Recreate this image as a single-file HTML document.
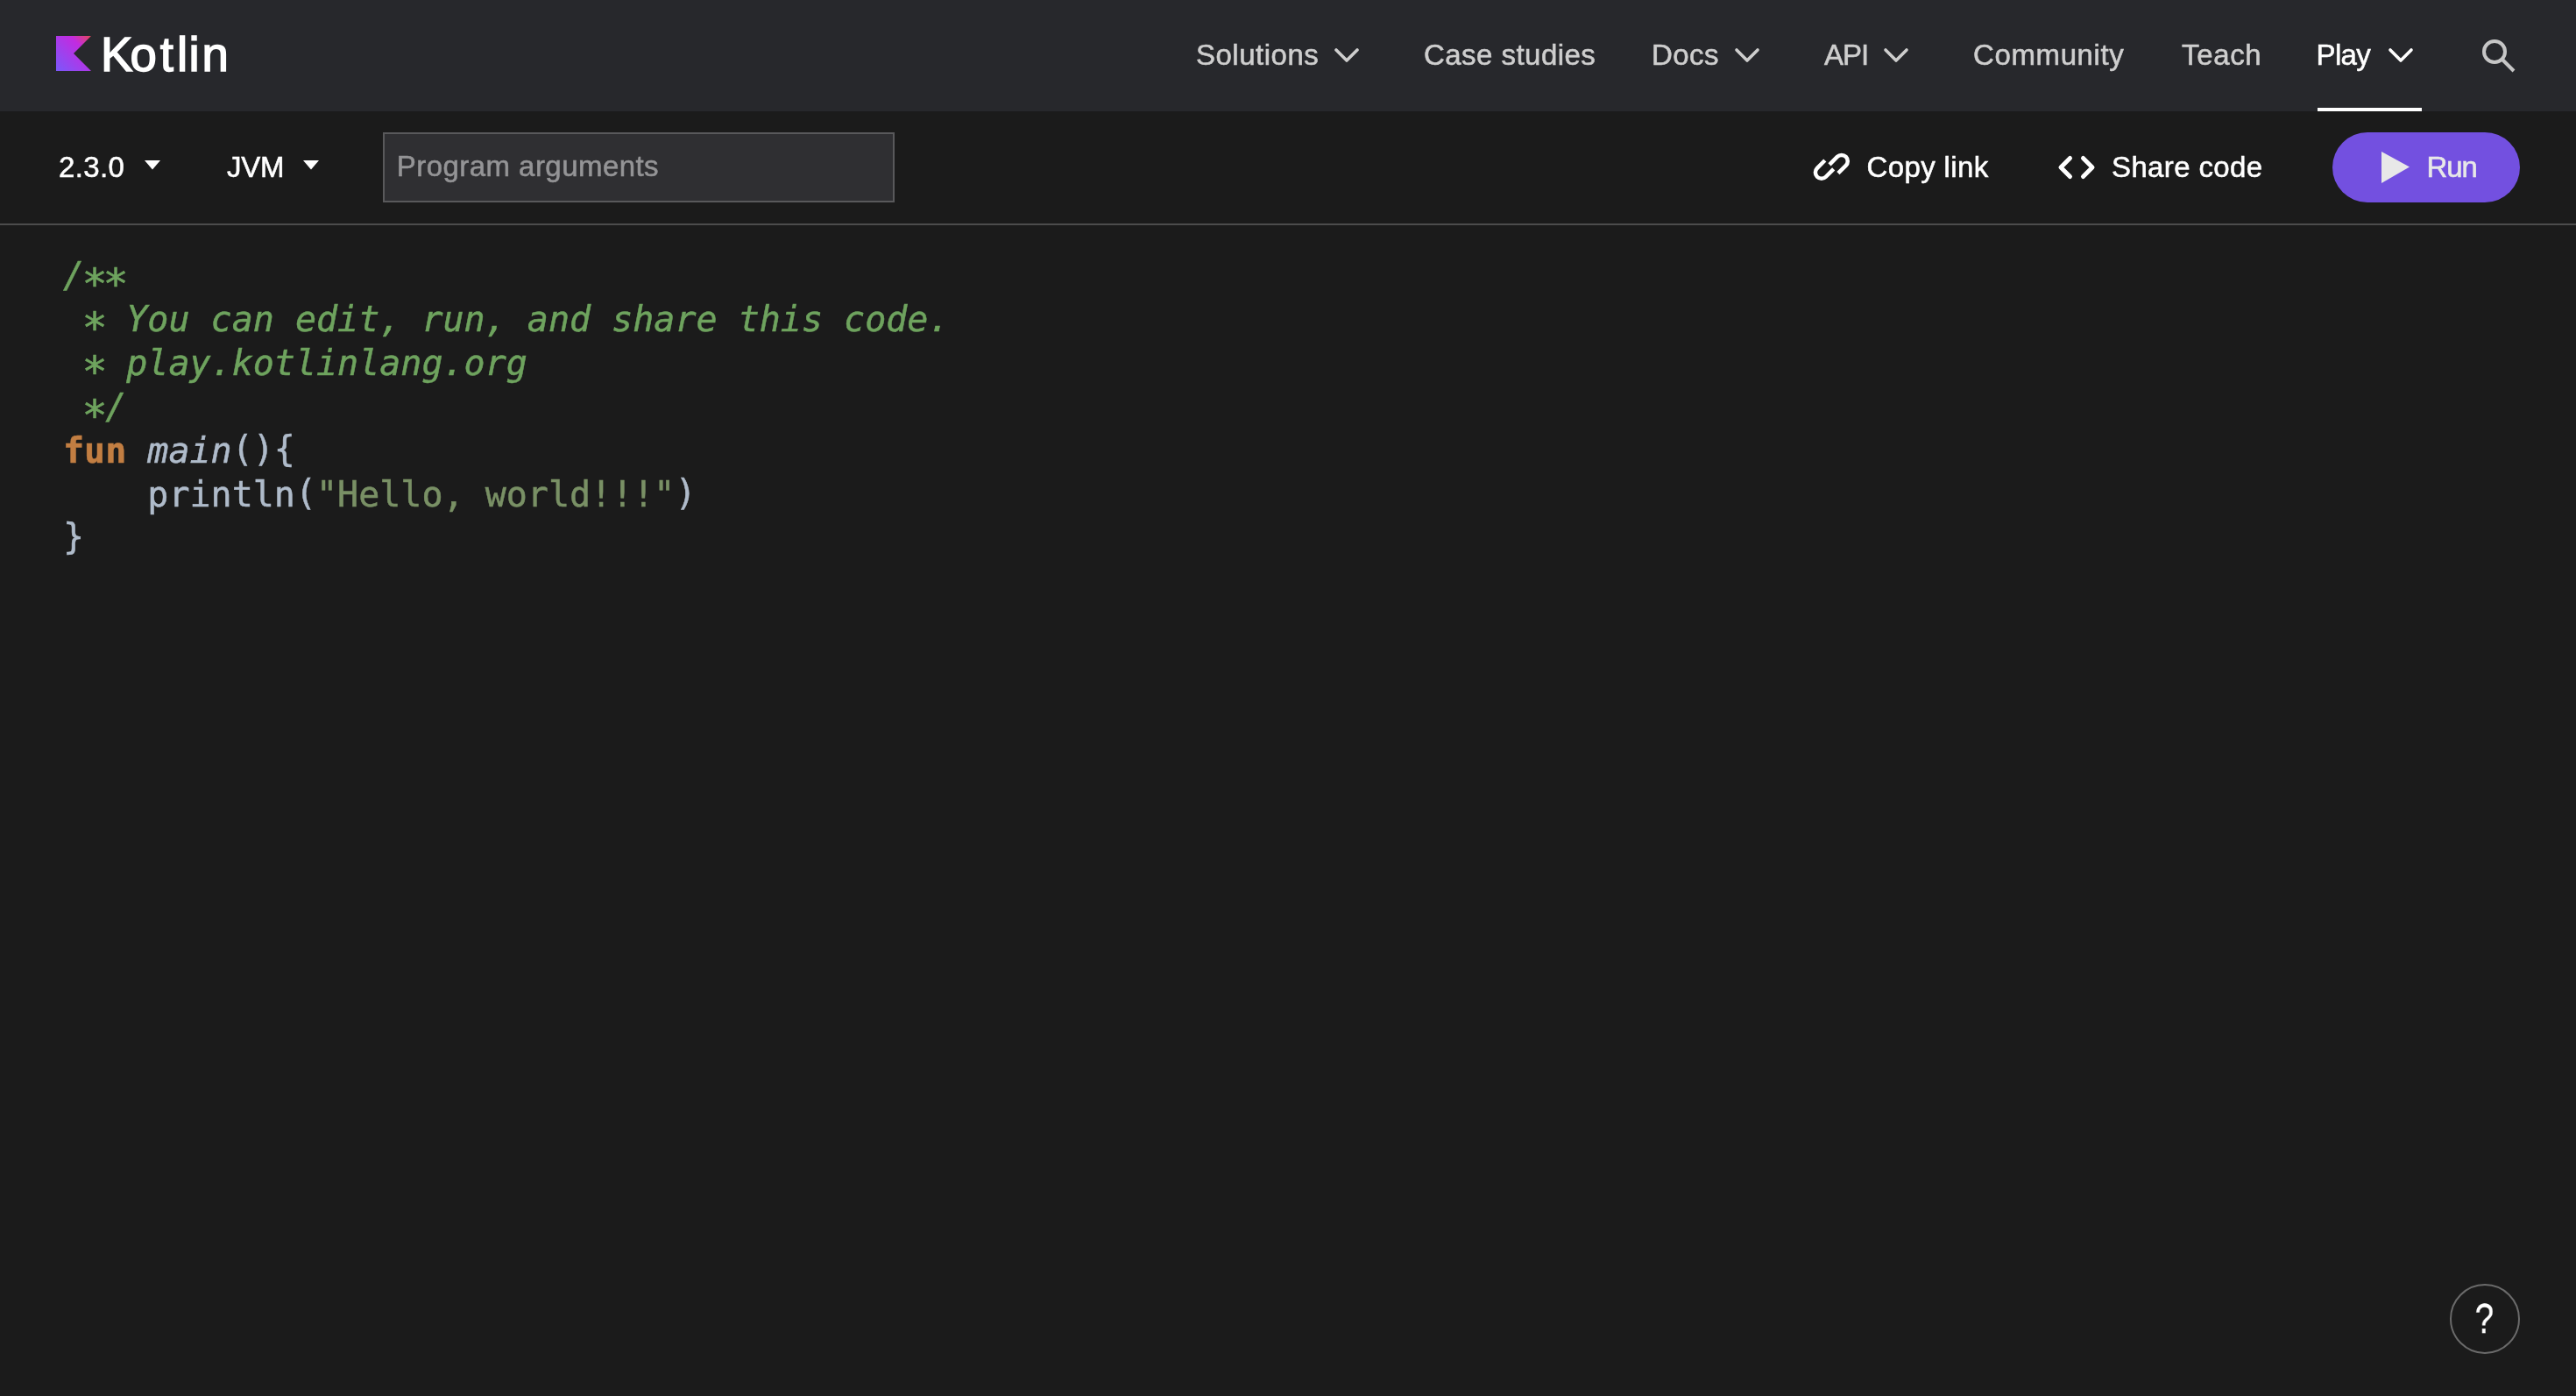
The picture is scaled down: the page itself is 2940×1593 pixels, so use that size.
<!DOCTYPE html>
<html lang="en">
<head>
<meta charset="utf-8">
<title>Kotlin Playground: Edit, Run, Share Kotlin Code Online</title>
<style>
  html, body { margin: 0; padding: 0; }
  body {
    width: 2940px; height: 1593px; overflow: hidden; position: relative;
    background: #1b1b1b; color: #fff;
    font-family: "Liberation Sans", sans-serif;
    -webkit-font-smoothing: antialiased;
  }
  #app { position: absolute; left: 0; top: 0; width: 2940px; height: 1593px; will-change: transform; }
  .abs { position: absolute; white-space: nowrap; line-height: 1; -webkit-text-stroke: 0.55px currentColor; }
  svg { position: absolute; overflow: visible; }

  /* ---------- global header ---------- */
  header.site {
    position: absolute; left: 0; top: 0; width: 2940px; height: 127px;
    background: #27282c;
  }
  .brand { left: 114.95px; top: 35.5px; font-size: 54.6px; color: #fff; -webkit-text-stroke: 1.5px #fff; }
  nav .item { font-size: 33px; color: #cecece; top: 46px; }
  nav .item.active { color: #fff; }
  nav .underline { position: absolute; left: 2645px; top: 123px; width: 119px; height: 4px; background: #fff; }

  /* ---------- playground toolbar ---------- */
  .toolbar {
    position: absolute; left: 0; top: 127px; width: 2940px; height: 128px;
    border-bottom: 2px solid #4c4c4c; background: #1b1b1b;
  }
  .tb { font-size: 33px; color: #fff; top: 46.5px; }
  .args {
    position: absolute; left: 437px; top: 24px; width: 580px; height: 76px;
    border: 2px solid #59595b; background: #2f2f32;
  }
  .args .ph { left: 13.8px; top: 20px; font-size: 33px; color: #949496; letter-spacing: 0.45px; }
  .run {
    position: absolute; left: 2662px; top: 24px; width: 214px; height: 80px;
    border-radius: 40px; background: #7350e0;
  }
  .run .lbl { left: 107.6px; top: 23px; font-size: 33px; color: #e8e8e8; letter-spacing: -1.1px; }

  /* ---------- editor ---------- */
  pre.code {
    position: absolute; left: 72px; top: 289px; margin: 0;
    font-family: "DejaVu Sans Mono", "Liberation Mono", monospace;
    font-size: 40px; line-height: 50px; color: #afbbca; letter-spacing: 0;
    -webkit-text-stroke: 0.5px currentColor;
    tab-size: 4;
  }
  .c { color: #6ea35e; font-style: italic; }
  .a { display: inline-block; font-style: normal; transform: translate(0px, 9.6px) scale(1.21); -webkit-text-stroke: 0.5px currentColor; }
  .k { color: #c27e42; font-weight: bold; }
  .f { font-style: italic; }
  .s { color: #799065; }
  .p { font-weight: normal; position: relative; top: -1.7px; }
  .b { font-weight: normal; position: relative; top: -2.1px; }

  /* ---------- help ---------- */
  .help {
    position: absolute; left: 2796px; top: 1465px; width: 76px; height: 76px;
    border: 2px solid #6a6a6a; border-radius: 50%;
  }
  .help .q { left: 23.8px; top: 14px; font-size: 48px; color: #fff; transform: scaleX(0.8); -webkit-text-stroke: 0.3px #fff; }
</style>
</head>
<body>
<div id="app">

<header class="site">
  <svg width="40" height="40" viewBox="0 0 40 40" style="left:64px;top:41px">
    <defs>
      <linearGradient id="kg" x1="40" y1="0" x2="0" y2="40" gradientUnits="userSpaceOnUse">
        <stop offset="0" stop-color="#e44857"/>
        <stop offset="0.3" stop-color="#c22be0"/>
        <stop offset="1" stop-color="#7a58fb"/>
      </linearGradient>
    </defs>
    <path d="M40 40H0V0h40L20 20z" fill="url(#kg)"/>
  </svg>
  <a class="abs brand"><span style="letter-spacing:-2.85px">K</span><span style="letter-spacing:3.8px">o</span><span style="letter-spacing:4.2px">t</span><span style="letter-spacing:1.4px">l</span><span style="letter-spacing:2.75px">i</span><span>n</span></a>

  <nav>
    <a class="abs item" style="left:1365px;letter-spacing:0.5px">Solutions</a>
    <svg width="28" height="17" style="left:1523px;top:55px"><path d="M2 2 L14 14 L26 2" fill="none" stroke="#cecece" stroke-width="3.6" stroke-linecap="round" stroke-linejoin="round"/></svg>
    <a class="abs item" style="left:1625px;letter-spacing:0.46px">Case studies</a>
    <a class="abs item" style="left:1885px;letter-spacing:0.4px">Docs</a>
    <svg width="28" height="17" style="left:1980px;top:55px"><path d="M2 2 L14 14 L26 2" fill="none" stroke="#cecece" stroke-width="3.6" stroke-linecap="round" stroke-linejoin="round"/></svg>
    <a class="abs item" style="left:2082px;letter-spacing:-0.95px">API</a>
    <svg width="28" height="17" style="left:2150px;top:55px"><path d="M2 2 L14 14 L26 2" fill="none" stroke="#cecece" stroke-width="3.6" stroke-linecap="round" stroke-linejoin="round"/></svg>
    <a class="abs item" style="left:2252px;letter-spacing:0.62px">Community</a>
    <a class="abs item" style="left:2490px;letter-spacing:0.65px">Teach</a>
    <a class="abs item active" style="left:2643.5px;letter-spacing:-0.63px">Play</a>
    <svg width="28" height="17" style="left:2726px;top:55px"><path d="M2 2 L14 14 L26 2" fill="none" stroke="#fff" stroke-width="3.6" stroke-linecap="round" stroke-linejoin="round"/></svg>
    <span class="underline"></span>
    <svg width="40" height="40" style="left:2832px;top:44px"><circle cx="15" cy="15" r="12" fill="none" stroke="#c6c6c6" stroke-width="4"/><path d="M24 24 L37 37" stroke="#c6c6c6" stroke-width="4" fill="none"/></svg>
  </nav>
</header>

<section class="toolbar">
  <span class="abs tb" style="left:67px;letter-spacing:0.35px">2.3.0</span>
  <svg width="18" height="11" style="left:165px;top:56px"><path d="M0 0H18L9 10.5z" fill="#fff"/></svg>
  <span class="abs tb" style="left:259px;letter-spacing:-0.3px">JVM</span>
  <svg width="18" height="11" style="left:346px;top:56px"><path d="M0 0H18L9 10.5z" fill="#fff"/></svg>

  <div class="args"><span class="abs ph">Program arguments</span></div>

  <svg width="50" height="40" style="left:2065px;top:45px">
    <g transform="translate(13.9,24.8) rotate(-45)" fill="none" stroke="#fff" stroke-width="4.5">
      <path d="M12.5 -7 H0 A7 7 0 0 0 0 7 H12.5"/>
      <path d="M12.8 0.07 H25.3 A7 7 0 0 1 25.3 14.07 H12.8"/>
    </g>
  </svg>
  <span class="abs tb" style="left:2130.5px;letter-spacing:0.37px">Copy link</span>

  <svg width="46" height="30" style="left:2347px;top:49px">
    <path d="M15.5 4.5 L5 15 L15.5 25.5 M30.5 4.5 L41 15 L30.5 25.5" fill="none" stroke="#fff" stroke-width="5" stroke-linecap="round" stroke-linejoin="round"/>
  </svg>
  <span class="abs tb" style="left:2410px;letter-spacing:0.37px">Share code</span>

  <button class="run" style="border:0;padding:0;font-family:inherit">
    <svg width="32" height="36" style="left:56px;top:22px"><path d="M0 0 L32 17.5 L0 36z" fill="#e8e8e8"/></svg>
    <span class="abs lbl">Run</span>
  </button>
</section>

<main>
<pre class="code"><span class="c">/<i class="a">*</i><i class="a">*</i>
 <i class="a">*</i> You can edit, run, and share this code.
 <i class="a">*</i> play.kotlinlang.org
 <i class="a">*</i>/</span>
<span class="k">fun</span> <span class="f">main</span><b class="p">()</b><b class="b">{</b>
    println<b class="p">(</b><span class="s">"Hello, world!!!"</span><b class="p">)</b>
<b class="b">}</b></pre>
</main>

<div class="help"><span class="abs q">?</span></div>

</div>
</body>
</html>
